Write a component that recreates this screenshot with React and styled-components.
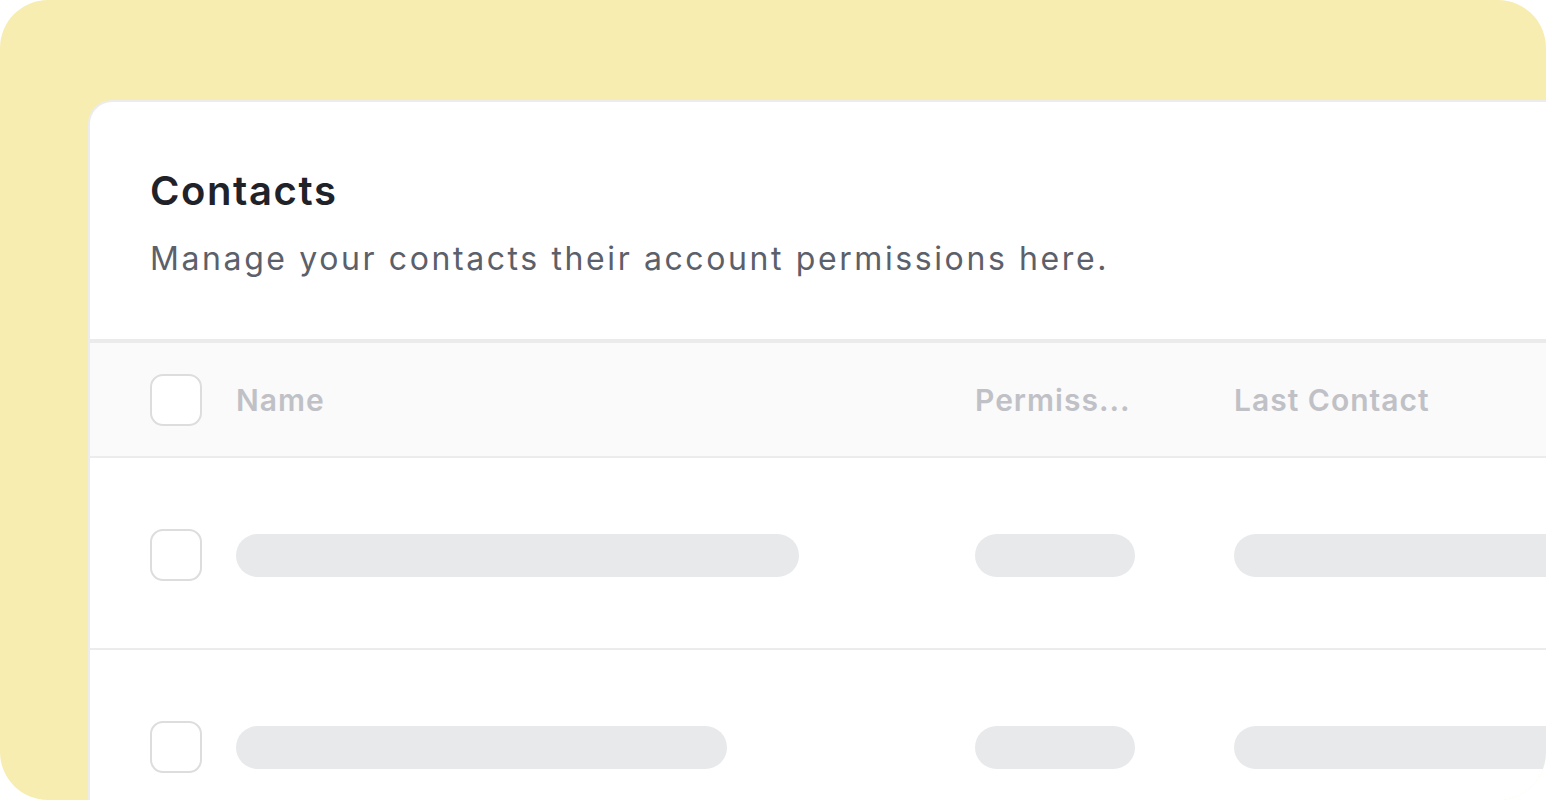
import React from "react";
import styled, { createGlobalStyle } from "styled-components";

const Global = createGlobalStyle`
  html, body { margin: 0; padding: 0; background: #ffffff; }
  body { font-family: Inter, "Noto Sans", sans-serif; overflow: hidden; }
  * { box-sizing: border-box; }
`;

const Frame = styled.div`
  width: 1546px;
  height: 800px;
  border-radius: 48px;
  background: #f7edb0;
  overflow: hidden;
  padding: 100px 0 0 88px;
`;

const Card = styled.div`
  width: 1540px;
  height: 760px;
  background: #ffffff;
  border-top: 2px solid #ececec;
  border-left: 2px solid #ececec;
  border-top-left-radius: 24px;
  overflow: hidden;
`;

const Head = styled.div`
  padding: 65px 0 0 60px;
  height: 237px;
`;

const Title = styled.h1`
  margin: 0;
  font-size: 40px;
  line-height: 48px;
  font-weight: 600;
  color: #1f2229;
  letter-spacing: 1.6px;
`;

const Subtitle = styled.p`
  margin: 24px 0 0;
  font-size: 32px;
  line-height: 40px;
  font-weight: 400;
  color: #5b606a;
  letter-spacing: 2.6px;
`;

const Row = styled.div`
  display: grid;
  grid-template-columns: 52px 773px 259px 1fr;
  align-items: center;
  padding-left: 60px;
  padding-top: ${(p) => (p.$head ? 0 : 4)}px;
  height: ${(p) => p.$h}px;
  background: ${(p) => (p.$head ? "#fafafa" : "#ffffff")};
  border-top: ${(p) => (p.$head ? "4px solid #ebebeb" : "none")};
  border-bottom: 2px solid #ececec;
`;

const Box = styled.div`
  width: 52px;
  height: 52px;
  border: 2px solid #dddddd;
  border-radius: 13px;
  background: #ffffff;
`;

const Cell = styled.div`
  padding-left: ${(p) => (p.$first ? 34 : 0)}px;
  display: flex;
  align-items: center;
`;

const HeadText = styled.span`
  font-size: 30px;
  font-weight: 600;
  color: #c0c1c6;
  letter-spacing: 1px;
  white-space: nowrap;
`;

const Bar = styled.div`
  height: 43px;
  width: ${(p) => p.$w}px;
  border-radius: 22px;
  background: #e8e9eb;
`;

const rows = [
  { name: 563, perm: 160 },
  { name: 491, perm: 160 },
];

export default function App() {
  return (
    <>
      <Global />
      <Frame>
        <Card>
          <Head>
            <Title>Contacts</Title>
            <Subtitle>Manage your contacts their account permissions here.</Subtitle>
          </Head>
          <Row $head $h={119}>
            <Box />
            <Cell $first>
              <HeadText>Name</HeadText>
            </Cell>
            <Cell>
              <HeadText>Permiss...</HeadText>
            </Cell>
            <Cell>
              <HeadText>Last Contact</HeadText>
            </Cell>
          </Row>
          {rows.map((r, i) => (
            <Row key={i} $h={192}>
              <Box />
              <Cell $first>
                <Bar $w={r.name} />
              </Cell>
              <Cell>
                <Bar $w={r.perm} />
              </Cell>
              <Cell>
                <Bar $w={400} />
              </Cell>
            </Row>
          ))}
        </Card>
      </Frame>
    </>
  );
}
